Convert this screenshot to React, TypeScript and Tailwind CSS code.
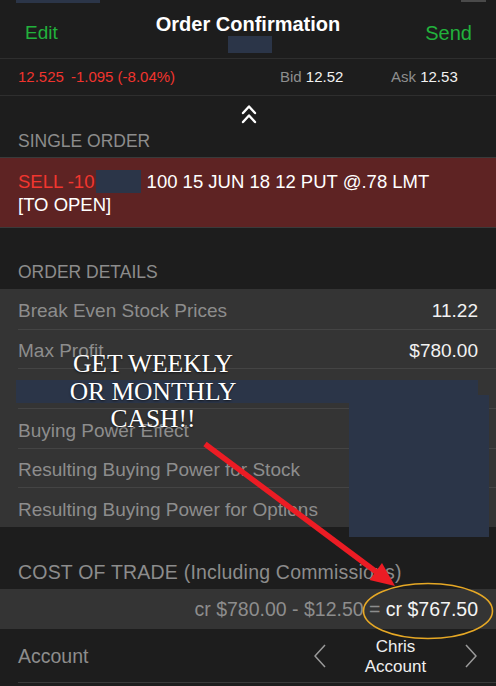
import React from "react";

const NAVY = "bg-[#2b3548]";

const rows: { label: string; value: string; h: string }[] = [
  { label: "Break Even Stock Prices", value: "11.22", h: "h-[40px]" },
  { label: "Max Profit", value: "$780.00", h: "h-[39px]" },
  { label: "", value: "", h: "h-[40px]" },
  { label: "Buying Power Effect", value: "", h: "h-[40px]" },
  { label: "Resulting Buying Power for Stock", value: "", h: "h-[39px]" },
  { label: "Resulting Buying Power for Options", value: "", h: "h-[40px]" },
];

function DoubleChevron() {
  return (
    <svg width="16" height="19" viewBox="0 0 16 19" fill="none">
      <polyline points="2,8 8,1.5 14,8" stroke="#ffffff" strokeWidth="2.4" strokeLinecap="round" strokeLinejoin="round" />
      <polyline points="2,17 8,10.5 14,17" stroke="#ffffff" strokeWidth="2.4" strokeLinecap="round" strokeLinejoin="round" />
    </svg>
  );
}

function Chevron({ dir }: { dir: "left" | "right" }) {
  return (
    <svg width="12" height="24" viewBox="0 0 12 24" fill="none">
      {dir === "left" ? (
        <polyline points="11,1 1,12 11,23" stroke="#9a9a9a" strokeWidth="1.5" strokeLinejoin="round" />
      ) : (
        <polyline points="1,1 11,12 1,23" stroke="#9a9a9a" strokeWidth="1.5" strokeLinejoin="round" />
      )}
    </svg>
  );
}

export default function App() {
  return (
    <div className="relative w-[496px] h-[686px] overflow-hidden bg-[#1d1d1d] font-['Liberation_Sans',Arial,sans-serif] text-white">
      {/* Header */}
      <div className="grid grid-cols-[1fr_auto_1fr] h-[58px] border-b border-[#2e2e2e] box-content">
        <div className="justify-self-start pl-[25px] pt-[21px] text-[19px] leading-[24px] text-[#22b13c]">Edit</div>
        <div className="flex flex-col items-center pt-[12px]">
          <div className="text-[20px] leading-[24px] font-bold text-white">Order Confirmation</div>
          <div className={`w-[44px] h-[17px] ml-[5px] ${NAVY}`} />
        </div>
        <div className="justify-self-end pr-[24px] pt-[21px] text-[20px] leading-[24px] text-[#22b13c]">Send</div>
      </div>

      {/* Quote row */}
      <div className="flex items-center h-[36px] border-b border-[#2e2e2e] box-content pl-[18px] text-[15px] leading-[20px]">
        <div className="flex-1 text-[#f0342e]">
          <span>12.525</span>
          <span className="ml-[7px]">-1.095 (-8.04%)</span>
        </div>
        <div className="w-[111px]">
          <span className="text-[#8e8e8e]">Bid</span> <span className="text-[#f2f2f2]">12.52</span>
        </div>
        <div className="w-[105px]">
          <span className="text-[#8e8e8e]">Ask</span> <span className="text-[#f2f2f2]">12.53</span>
        </div>
      </div>

      {/* Chevron + single order label */}
      <div className="flex flex-col h-[61px]">
        <div className="flex justify-center pt-[9px] h-[28px] ml-[1px]">
          <DoubleChevron />
        </div>
        <div className="pl-[18px] pt-[7px] text-[17.5px] leading-[20px] text-[#8c8c8c]">SINGLE ORDER</div>
      </div>

      {/* Red order row */}
      <div className="border-y border-[#3a3a3a] bg-[#5e2323] h-[71px] pl-[18px] pt-[12px] text-[18.5px] leading-[23px] text-white">
        <div>
          <span className="text-[#f2362f]">SELL -10</span>
          <span className={`inline-block align-top w-[45px] h-[23px] ml-[2px] ${NAVY}`} /> 100 15 JUN 18 12 PUT @.78 LMT
        </div>
        <div>[TO OPEN]</div>
      </div>

      {/* Order details label */}
      <div className="h-[61px] pl-[18px] pt-[34px] text-[17.5px] leading-[20px] text-[#8c8c8c]">ORDER DETAILS</div>

      {/* Details table */}
      <div className="bg-[#343434]">
        {rows.map((r, i) => (
          <div key={i} className={`${r.h} pl-[18px]`}>
            <div
              className={`flex items-center h-full pr-[18px] pt-[4px] text-[19px] leading-[22px] ${
                i > 0 ? "border-t border-[#444444]" : ""
              }`}
            >
              <span className="flex-1 text-[#8d8d8d]">{r.label}</span>
              <span className="text-[#f2f2f2]">{r.value}</span>
            </div>
          </div>
        ))}
      </div>

      {/* Cost of trade */}
      <div className="h-[62px] pl-[18px] pt-[34px] text-[19.5px] leading-[22px] tracking-[0.2px] text-[#8c8c8c]">
        COST OF TRADE (Including Commissions)
      </div>
      <div className="flex items-center justify-end h-[40px] bg-[#343434] pr-[18px] text-[19.5px] leading-[22px]">
        <span className="text-[#8d8d8d]">cr $780.00 - $12.50 =&nbsp;</span>
        <span className="text-[#f4f4f4]">cr $767.50</span>
      </div>

      {/* Account */}
      <div className="pl-[18px]">
        <div className="flex items-center h-[53px] border-b border-[#3a3a3a] box-content pr-[19px]">
          <span className="flex-1 text-[19.5px] leading-[22px] text-[#8d8d8d]">Account</span>
          <Chevron dir="left" />
          <div className="w-[139px] text-center text-[17px] leading-[20px] text-[#f0f0f0] pt-[3px]">
            <div>Chris</div>
            <div>Account</div>
          </div>
          <Chevron dir="right" />
        </div>
      </div>

      {/* Redaction overlays */}
      <div className={`absolute left-[16px] top-0 w-[84px] h-[3px] ${NAVY}`} />
      <div className="absolute left-[461px] top-0 w-[25px] h-[2px] bg-[#4a4a4a]" />
      <div className={`absolute left-[16px] top-[380px] w-[462px] h-[23px] ${NAVY}`} />
      <div className={`absolute left-[349px] top-[395px] w-[140px] h-[142px] ${NAVY}`} />

      {/* Annotation text */}
      <div className="absolute left-[43px] top-[350px] w-[220px] text-center font-['Liberation_Serif','Times_New_Roman',serif] text-[25.5px] leading-[27.5px] text-white [text-shadow:0_1px_2px_rgba(0,0,0,0.6)]">
        <div>GET WEEKLY</div>
        <div>OR MONTHLY</div>
        <div>CASH!!</div>
      </div>

      {/* Arrow and ellipse */}
      <svg className="absolute left-0 top-0 pointer-events-none" width="496" height="686" viewBox="0 0 496 686">
        <line x1="205" y1="444" x2="377" y2="572.5" stroke="#ec1c24" strokeWidth="5.5" />
        <polygon points="395,586 369.5,580 382,563" fill="#ec1c24" />
        <ellipse cx="428" cy="611" rx="64.5" ry="27.5" fill="none" stroke="#e6a825" strokeWidth="1.6" />
      </svg>
    </div>
  );
}
